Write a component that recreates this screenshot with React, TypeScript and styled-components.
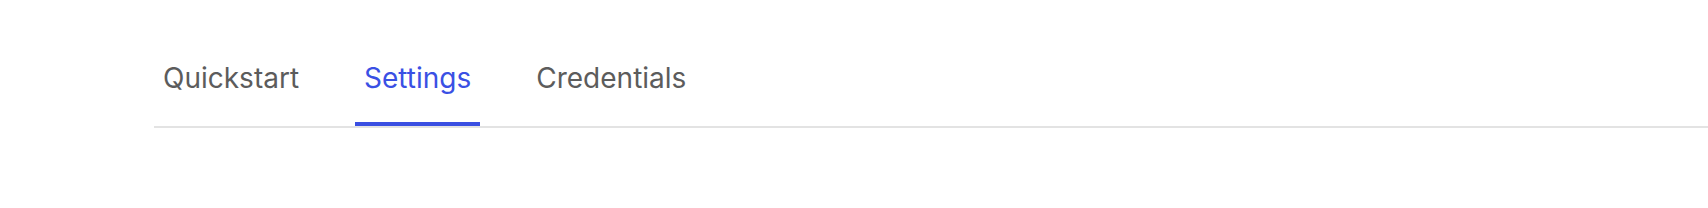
import React, { useState } from "react";
import styled, { createGlobalStyle } from "styled-components";

const GlobalStyle = createGlobalStyle`
  html, body {
    margin: 0;
    padding: 0;
    background: #ffffff;
  }
  body {
    font-family: Inter, "Noto Sans", "Liberation Sans", sans-serif;
  }
`;

const Page = styled.div`
  width: 1708px;
  height: 208px;
  padding: 61px 0 0 154px;
  box-sizing: border-box;
`;

const TabList = styled.div`
  display: flex;
  gap: 47px;
  border-bottom: 2px solid #e3e3e3;
`;

const Tab = styled.button<{ $active?: boolean }>`
  appearance: none;
  background: none;
  border: none;
  border-bottom: 4px solid ${(p) => (p.$active ? "#3a4fe2" : "transparent")};
  margin: 0;
  padding: 0 9px 27px;
  font-family: inherit;
  font-size: 28px;
  line-height: 34px;
  font-weight: 400;
  color: ${(p) => (p.$active ? "#3a50e4" : "#5c5c5c")};
  cursor: pointer;
`;

const tabs = ["Quickstart", "Settings", "Credentials"];

export default function App() {
  const [active, setActive] = useState("Settings");
  return (
    <>
      <GlobalStyle />
      <Page>
        <TabList>
          {tabs.map((t) => (
            <Tab key={t} $active={t === active} onClick={() => setActive(t)}>
              {t}
            </Tab>
          ))}
        </TabList>
      </Page>
    </>
  );
}
